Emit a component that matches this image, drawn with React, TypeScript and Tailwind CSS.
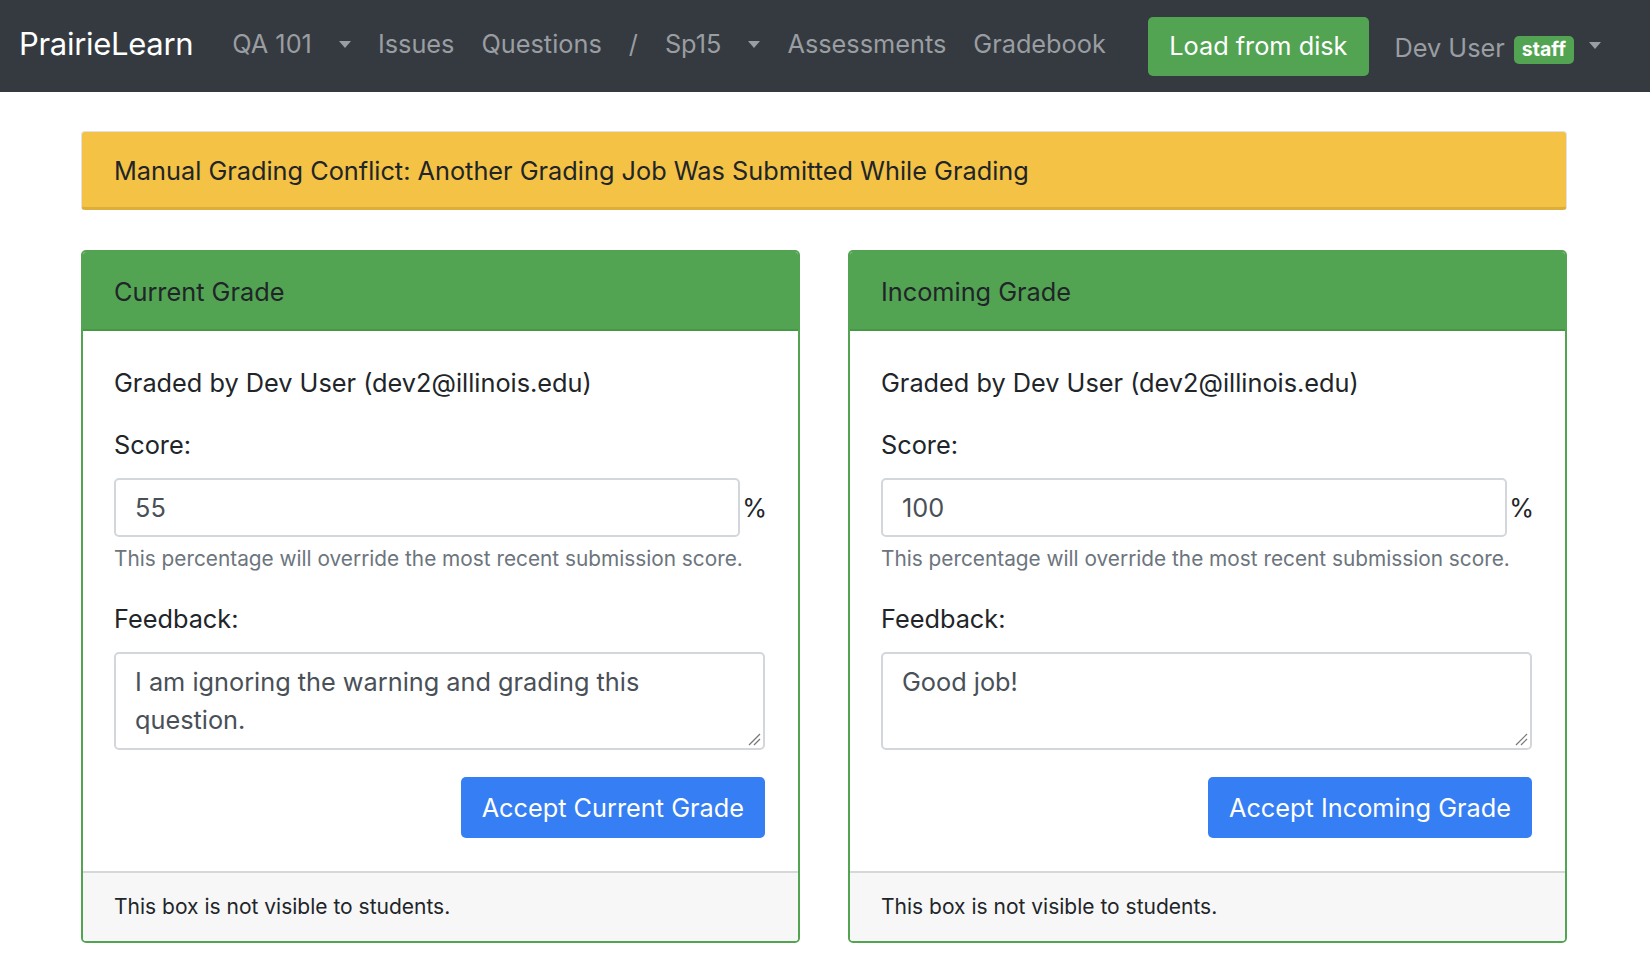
import React from "react";

function Caret({ className = "" }: { className?: string }) {
  return (
    <span
      className={`inline-block w-0 h-0 border-x-[6.5px] border-x-transparent border-t-[7px] ${className}`}
    />
  );
}

function GradeCard({
  title,
  score,
  feedback,
  action,
}: {
  title: string;
  score: string;
  feedback: string;
  action: string;
}) {
  return (
    <div className="w-[719px] border-2 border-[#52a452] rounded-[5px] flex flex-col overflow-hidden">
      {/* header */}
      <div className="bg-[#52a452] h-[79px] flex items-center px-[31px] pt-[2px] border-b-2 border-[#469846]">
        <span className="text-[25.3px] text-[#212529]">{title}</span>
      </div>

      {/* body */}
      <div className="px-[31px] pt-[34px] pb-[33px] flex flex-col">
        <p className="text-[25.3px] leading-[36px] text-[#212529]">
          Graded by Dev User (dev2@illinois.edu)
        </p>
        <label className="mt-[26px] text-[25.3px] leading-[36px] text-[#212529]">
          Score:
        </label>
        <div className="mt-[15px] flex items-center">
          <div className="w-[629px] h-[59px] border-2 border-[#d3d7db] rounded-[5px] flex items-center px-[19px] text-[25.3px] text-[#495057]">
            {score}
          </div>
          <span className="ml-[2px] text-[25.3px] text-[#212529]">%</span>
        </div>
        <p className="mt-[7px] text-[20.8px] leading-[29px] text-[#6c757d]">
          This percentage will override the most recent submission score.
        </p>
        <label className="mt-[28px] text-[25.3px] leading-[36px] text-[#212529]">
          Feedback:
        </label>
        <div className="relative mt-[15px] w-[651px] h-[98px] border-2 border-[#d3d7db] rounded-[5px] pl-[19px] pr-[24px] pt-[9px] text-[25.3px] leading-[38px] text-[#495057]">
          {feedback}
          <svg
            className="absolute right-[2px] bottom-[2px]"
            width="14"
            height="14"
            viewBox="0 0 14 14"
          >
            <line x1="2" y1="13" x2="13" y2="2" stroke="#777" strokeWidth="1.2" />
            <line x1="7" y1="13" x2="13" y2="7" stroke="#777" strokeWidth="1.2" />
          </svg>
        </div>
        <div className="mt-[27px] flex justify-end w-[651px]">
          <button className="h-[61px] px-[21px] bg-[#367ef4] rounded-[5px] text-white text-[25.3px]">
            {action}
          </button>
        </div>
      </div>

      {/* footer */}
      <div className="bg-[#f7f7f7] border-t-2 border-[#d6d7d8] h-[70px] flex items-center px-[31px]">
        <span className="text-[21px] text-[#212529]">
          This box is not visible to students.
        </span>
      </div>
    </div>
  );
}

export default function App() {
  return (
    <div
      className="w-[1650px] h-[970px] bg-white overflow-hidden"
      style={{ fontFamily: "Inter, 'Noto Sans', sans-serif" }}
    >
      {/* navbar */}
      <nav className="h-[92px] bg-[#343a40] flex items-center pl-[19px] pr-[49px] pb-[4px]">
        <span className="text-[31px] text-white tracking-[-0.3px]">PrairieLearn</span>
        <div className="ml-[39px] flex items-center gap-[27px] text-[25.3px] text-[#9a9da1]">
          <span>QA 101</span>
          <Caret className="border-t-[#9a9da1]" />
          <span>Issues</span>
          <span>Questions</span>
          <span>/</span>
          <span>Sp15</span>
          <Caret className="border-t-[#9a9da1]" />
          <span>Assessments</span>
          <span>Gradebook</span>
        </div>
        <div className="ml-auto flex items-center text-[25.3px] text-[#9a9da1]">
          <button className="h-[59px] px-[21px] mt-[4px] bg-[#52a452] rounded-[5px] text-white text-[25.3px]">
            Load from disk
          </button>
          <span className="ml-[26px] mt-[7px]">Dev User</span>
          <span className="ml-[9px] mt-[11px] h-[28px] px-[8px] bg-[#52a452] rounded-[5px] text-white text-[19.5px] font-bold flex items-center">
            staff
          </span>
          <Caret className="ml-[15px] mt-[3px] border-t-[#9a9da1]" />
        </div>
      </nav>

      {/* content */}
      <div className="ml-[81px] w-[1486px] pt-[39px]">
        <div className="h-[79px] bg-[#f4c244] border border-[#e2e2e2] border-b-[3px] border-b-[#dcae3c] rounded-[4px] flex items-center px-[32px] pt-[3px]">
          <span className="text-[25.3px] text-[#212529]">
            Manual Grading Conflict: Another Grading Job Was Submitted While Grading
          </span>
        </div>

        <div className="mt-[40px] flex justify-between">
          <GradeCard
            title="Current Grade"
            score="55"
            feedback="I am ignoring the warning and grading this question."
            action="Accept Current Grade"
          />
          <GradeCard
            title="Incoming Grade"
            score="100"
            feedback="Good job!"
            action="Accept Incoming Grade"
          />
        </div>
      </div>
    </div>
  );
}
